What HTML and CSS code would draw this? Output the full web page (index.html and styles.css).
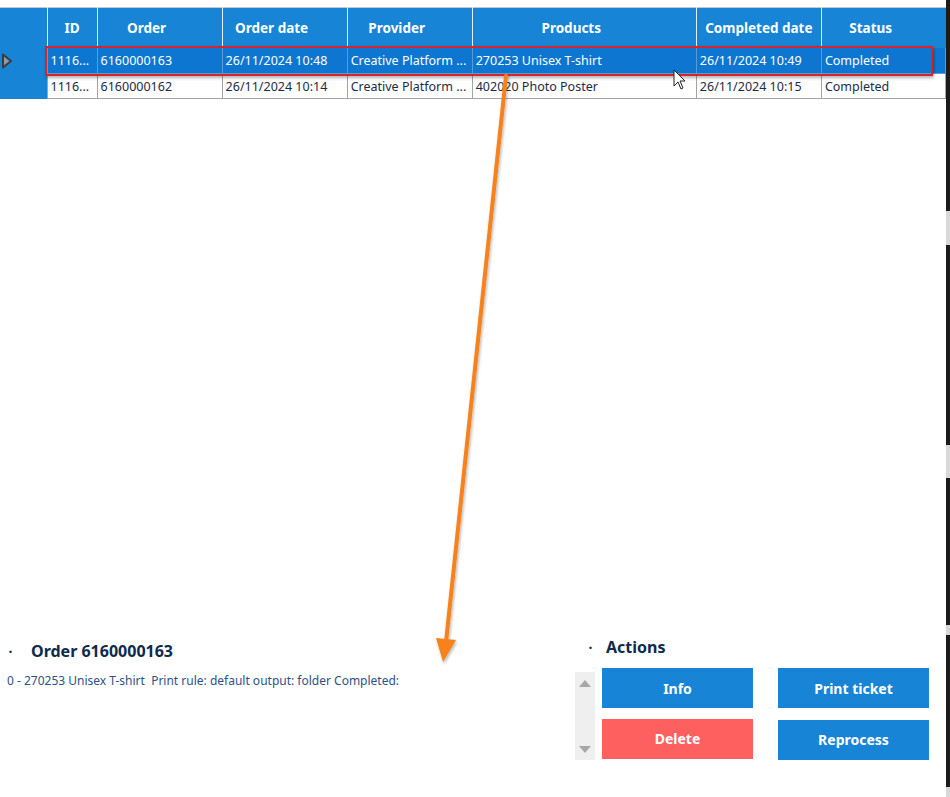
FILE: index.html
```html
<!DOCTYPE html>
<html lang="en">
<head>
    <meta charset="UTF-8">
    <title>Orders</title>
    <link rel="stylesheet" href="styles.css">
</head>
<body>
    <div class="window">
        <div class="main">
            <!-- Orders grid -->
            <table class="grid">
                <colgroup>
                    <col style="width:47px"><col style="width:50px"><col style="width:125px"><col style="width:125px">
                    <col style="width:125px"><col style="width:224px"><col style="width:125px"><col style="width:124px">
                </colgroup>
                <thead>
                    <tr>
                        <th class="row-head"></th>
                        <th class="narrow">ID</th>
                        <th>Order</th>
                        <th>Order date</th>
                        <th>Provider</th>
                        <th>Products</th>
                        <th class="narrow">Completed date</th>
                        <th>Status</th>
                    </tr>
                </thead>
                <tbody>
                    <tr class="selected">
                        <td class="row-head">
                            <svg class="caret" width="12" height="16" viewBox="0 0 12 16"><path d="M2 1.5 L10 8 L2 14.5 Z" fill="#8a9bb0" stroke="#3b3b3b" stroke-width="2" stroke-linejoin="round"/></svg>
                        </td>
                        <td>1116...</td>
                        <td>6160000163</td>
                        <td>26/11/2024 10:48</td>
                        <td>Creative Platform ...</td>
                        <td>270253 Unisex T-shirt</td>
                        <td>26/11/2024 10:49</td>
                        <td>Completed</td>
                    </tr>
                    <tr>
                        <td class="row-head"></td>
                        <td>1116...</td>
                        <td>6160000162</td>
                        <td>26/11/2024 10:14</td>
                        <td>Creative Platform ...</td>
                        <td>402020 Photo Poster</td>
                        <td>26/11/2024 10:15</td>
                        <td>Completed</td>
                    </tr>
                </tbody>
            </table>

            <div class="spacer"></div>

            <!-- Details + actions -->
            <div class="bottom">
                <div class="details">
                    <h3 class="section-title"><span class="dot">·</span>Order 6160000163</h3>
                    <p class="detail-line">0 - 270253 Unisex T-shirt&nbsp; Print rule: default output: folder Completed:</p>
                </div>
                <div class="actions">
                    <h3 class="section-title"><span class="dot">·</span>Actions</h3>
                    <div class="actions-body">
                        <div class="scroller">
                            <span class="arrow-up"></span>
                            <span class="arrow-down"></span>
                        </div>
                        <div class="buttons">
                            <button class="btn">Info</button>
                            <button class="btn">Print ticket</button>
                            <button class="btn btn-danger">Delete</button>
                            <button class="btn btn-low">Reprocess</button>
                        </div>
                    </div>
                </div>
            </div>
        </div>
        <div class="edge">
            <span class="edge-patch p1"></span>
            <span class="edge-patch p2"></span>
            <span class="edge-patch p3"></span>
            <span class="edge-patch p4"></span>
        </div>
    </div>

    <!-- annotation overlays -->
    <div class="highlight"></div>
    <svg class="annot" width="950" height="797" viewBox="0 0 950 797">
        <defs>
            <filter id="sh" x="-20%" y="-20%" width="140%" height="140%">
                <feDropShadow dx="1" dy="2" stdDeviation="1.5" flood-color="#000" flood-opacity="0.3"/>
            </filter>
        </defs>
        <g filter="url(#sh)">
            <line x1="506" y1="76" x2="446" y2="642" stroke="#f7821b" stroke-width="4" stroke-linecap="round"/>
            <polygon points="436,638 456,640 443,662" fill="#f7821b"/>
        </g>
        <path d="M674 70 L674 86 L678 82 L681 89 L683 88 L680 81 L685 81 Z" fill="#fff" stroke="#222" stroke-width="1"/>
    </svg>
</body>
</html>
```

FILE: styles.css
```css
* {
    margin: 0;
    padding: 0;
    box-sizing: border-box;
}

body {
    font-family: "Noto Sans", "Open Sans", sans-serif;
    background-color: #fff;
    width: 950px;
    height: 797px;
    overflow: hidden;
}

.window {
    display: flex;
    height: 797px;
}

.main {
    flex: 1;
    display: flex;
    flex-direction: column;
    padding-top: 7px;
}

/* Grid */
.grid {
    width: 946px;
    table-layout: fixed;
    border-collapse: collapse;
    border-top: 1px solid #c8c8c8;
    font-size: 12.5px;
}

.grid th {
    background-color: #1784d6;
    color: #fff;
    font-size: 13.5px;
    font-weight: 700;
    height: 40px;
    padding-right: 26px;
    border-left: 1px solid #e4eef8;
    text-align: center;
    white-space: nowrap;
}

.grid th.narrow {
    padding: 0 2px;
}

.grid th:first-child {
    border-left: none;
    padding: 0;
}

.grid td {
    height: 25px;
    padding: 0 3px;
    color: #1c2b46;
    border: 1px solid #a4a4a4;
    white-space: nowrap;
    overflow: hidden;
}

.grid tbody tr:first-child td {
    height: 26px;
    border-top: none;
}

.grid td.row-head {
    background-color: #1784d6;
    border: none;
    border-top: 1px solid #1784d6;
    padding: 0 0 0 1px;
}

.grid tr.selected td {
    background-color: #0d76d0;
    color: #fff;
    border-color: #5a9ad8;
}

.grid tr.selected td.row-head {
    background-color: #1784d6;
}

.caret {
    display: block;
    margin-top: 1px;
}

.spacer {
    flex: 1;
}

/* Bottom panel */
.bottom {
    display: flex;
    height: 165px;
    padding-bottom: 37px;
}

.details {
    width: 575px;
    padding-top: 7px;
}

.section-title {
    display: flex;
    align-items: center;
    font-size: 16px;
    font-weight: 700;
    color: #0e2a4d;
    height: 24px;
}

.dot {
    font-size: 14px;
    width: 24px;
    text-align: center;
    color: #0e2a4d;
}

.details .section-title .dot {
    width: 31px;
    padding-right: 10px;
}

.detail-line {
    margin-top: 9px;
    margin-left: 7px;
    font-size: 12px;
    color: #2b5286;
}

.actions {
    width: 370px;
    padding-top: 3px;
}

.actions .section-title .dot {
    width: 31px;
}

.actions-body {
    display: flex;
    margin-top: 9px;
}

.scroller {
    width: 20px;
    height: 88px;
    margin-top: 4px;
    background-color: #efefef;
    display: flex;
    flex-direction: column;
    justify-content: space-between;
    align-items: center;
    padding: 8px 0 7px;
}

.arrow-up, .arrow-down {
    width: 0;
    height: 0;
    border-left: 6px solid transparent;
    border-right: 6px solid transparent;
}

.arrow-up {
    border-bottom: 7px solid #a8a8a8;
}

.arrow-down {
    border-top: 7px solid #a8a8a8;
}

.buttons {
    margin-left: 7px;
    display: grid;
    grid-template-columns: 151px 151px;
    column-gap: 25px;
    row-gap: 10px;
}

.btn {
    height: 40px;
    border: none;
    background-color: #1784d6;
    color: #fff;
    font-family: "Noto Sans", "Open Sans", sans-serif;
    font-size: 14px;
    font-weight: 700;
    cursor: pointer;
}

.btn-danger {
    background-color: #fe5f5f;
}

.btn-low {
    margin-top: 1px;
}

/* Right window edge */
.edge {
    width: 4px;
    background-color: #1b1b1b;
    position: relative;
}

.edge-patch {
    position: absolute;
    left: 0;
    width: 4px;
    background-color: #d8d8d8;
}

.p1 { top: 211px; height: 34px; }
.p2 { top: 445px; height: 33px; }
.p3 { top: 625px; height: 10px; }
.p4 { top: 787px; height: 10px; }

/* Annotation overlays */
.highlight {
    position: absolute;
    left: 45px;
    top: 46px;
    width: 888px;
    height: 30px;
    border: 2px solid #d8232a;
    box-shadow: 1px 2px 3px rgba(0, 0, 0, 0.3);
}

.annot {
    position: absolute;
    left: 0;
    top: 0;
    pointer-events: none;
}
```
